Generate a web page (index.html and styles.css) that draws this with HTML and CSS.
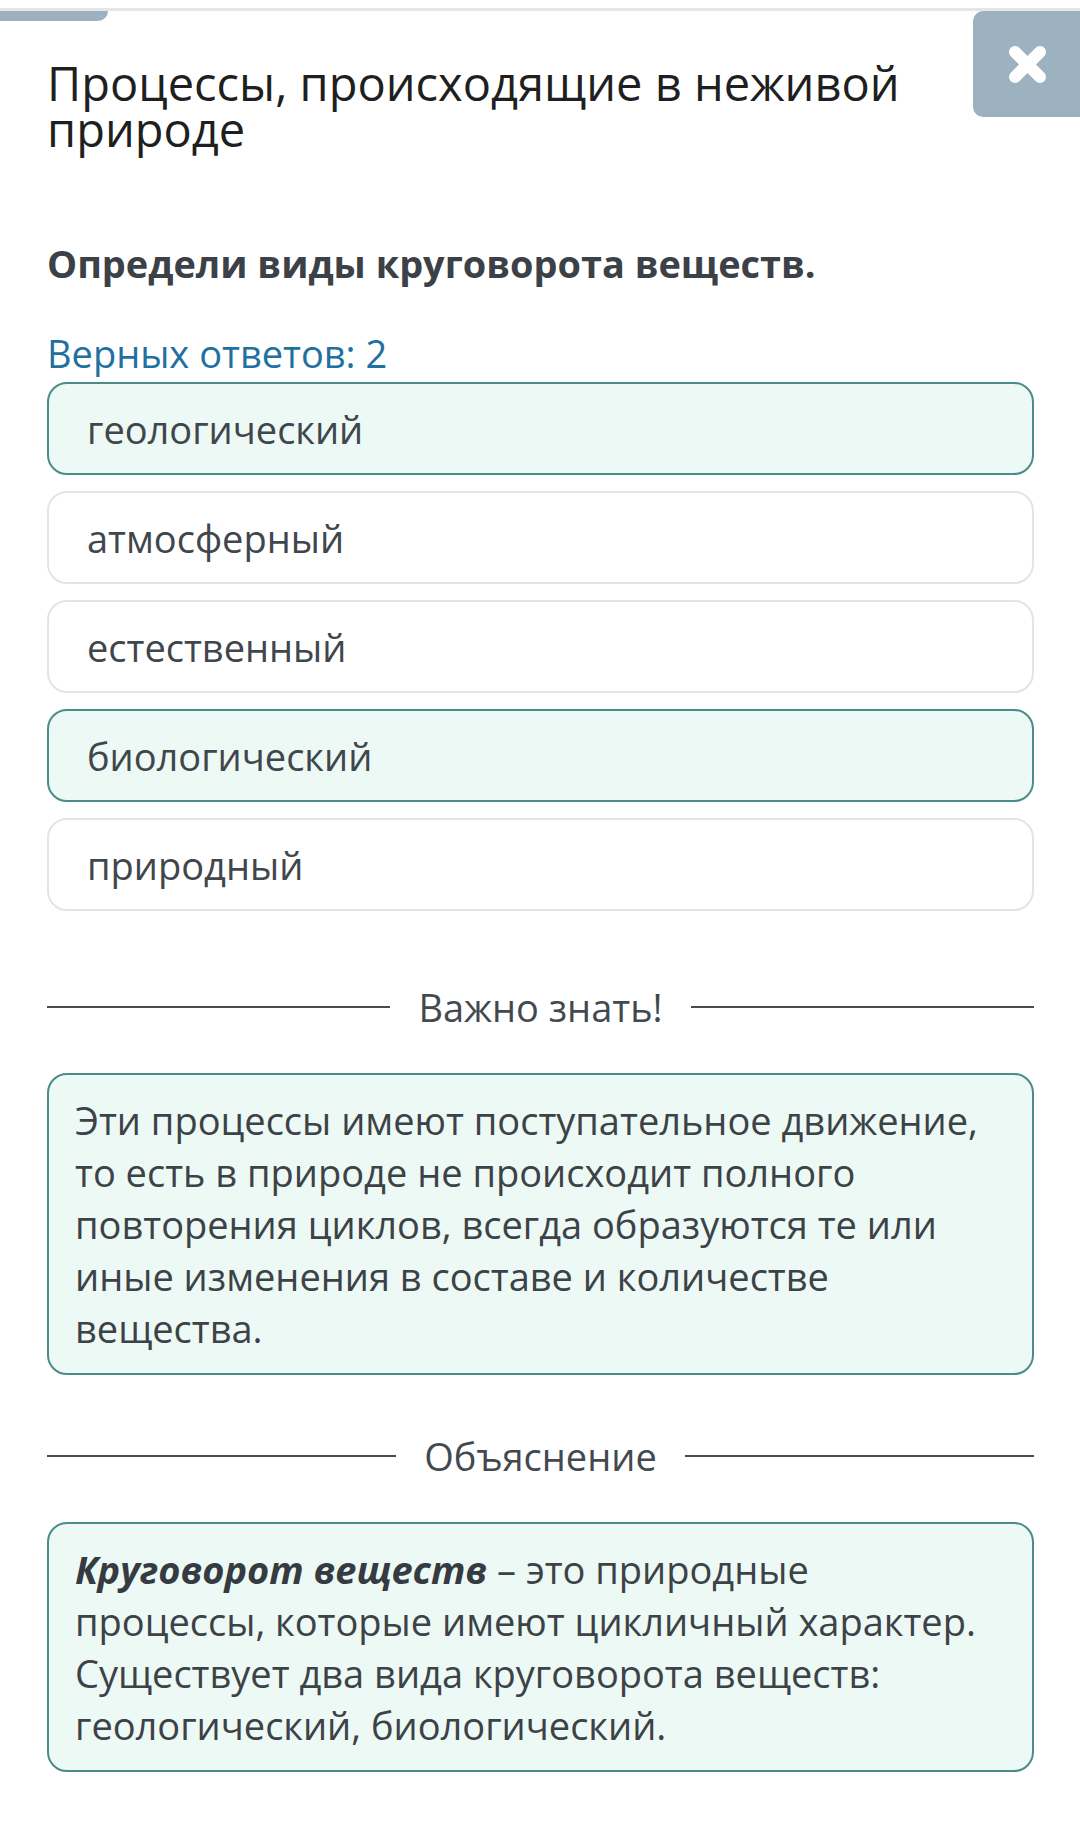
FILE: index.html
```html
<!DOCTYPE html>
<html lang="ru">
<head>
    <meta charset="UTF-8">
    <meta name="viewport" content="width=device-width, initial-scale=1.0">
    <title>Процессы, происходящие в неживой природе</title>
    <link rel="stylesheet" href="styles.css">
</head>
<body>
    <div class="top-line"></div>
    <div class="progress-tab"></div>

    <button class="close-button" aria-label="Закрыть">
        <svg width="39" height="39" viewBox="0 0 39 39">
            <line x1="7" y1="7" x2="32" y2="32" stroke="#fff" stroke-width="12" stroke-linecap="round"></line>
            <line x1="32" y1="7" x2="7" y2="32" stroke="#fff" stroke-width="12" stroke-linecap="round"></line>
        </svg>
    </button>

    <main class="task">
        <h1 class="task-title">Процессы, происходящие в неживой природе</h1>
        <p class="task-question">Определи виды круговорота веществ.</p>
        <p class="answer-count">Верных ответов: 2</p>

        <div class="options">
            <div class="option selected">геологический</div>
            <div class="option">атмосферный</div>
            <div class="option">естественный</div>
            <div class="option selected">биологический</div>
            <div class="option">природный</div>
        </div>

        <div class="divider first">
            <span class="divider-line"></span>
            <span class="divider-label">Важно знать!</span>
            <span class="divider-line"></span>
        </div>
        <div class="note">
            Эти процессы имеют поступательное движение, то есть в природе не происходит полного повторения циклов, всегда образуются те или иные изменения в составе и количестве вещества.
        </div>

        <div class="divider">
            <span class="divider-line"></span>
            <span class="divider-label">Объяснение</span>
            <span class="divider-line"></span>
        </div>
        <div class="note">
            <b><i>Круговорот веществ</i></b> – это природные процессы, которые имеют цикличный характер. Существует два вида круговорота веществ: геологический, биологический.
        </div>
    </main>
</body>
</html>
```

FILE: styles.css
```css
body {
    margin: 0;
    padding: 8px 0 0;
    background-color: #fff;
    font-family: 'Open Sans', 'Noto Sans', sans-serif;
    color: #3d4349;
    position: relative;
}
.top-line {
    height: 3px;
    background-color: #e5e6e7;
}
.progress-tab {
    width: 108px;
    height: 10px;
    background-color: #9db1c0;
    border-bottom-right-radius: 10px;
}
.close-button {
    position: absolute;
    top: 11px;
    right: 0;
    width: 107px;
    height: 106px;
    border: none;
    padding: 0 0 0 2px;
    background-color: #9db2c1;
    border-radius: 10px 0 0 10px;
    display: flex;
    align-items: center;
    justify-content: center;
    cursor: pointer;
}
.task {
    padding: 0 46px 60px 47px;
}
.task-title {
    margin: 39px 110px 0 0;
    font-size: 47px;
    line-height: 46px;
    font-weight: 400;
    color: #1f1f1f;
}
.task-question {
    margin: 88px 0 0;
    font-size: 37.9px;
    line-height: 46px;
    font-weight: 700;
    color: #3b4147;
}
.answer-count {
    margin: 44px 0 0;
    font-size: 38px;
    line-height: 46px;
    color: #21709f;
}
.options {
    display: flex;
    flex-direction: column;
    gap: 16px;
    margin-top: 6px;
}
.option {
    height: 93px;
    box-sizing: border-box;
    display: flex;
    align-items: center;
    padding: 0 38px;
    border: 2px solid #e3e4e4;
    border-radius: 20px;
    font-size: 38px;
    color: #40464c;
}
.option.selected {
    border-color: #4a8c89;
    background-color: #edf9f4;
}
.divider {
    display: flex;
    align-items: center;
    gap: 28px;
    margin-top: 55px;
    height: 52px;
}
.divider.first {
    margin-top: 70px;
}
.divider-line {
    flex: 1;
    height: 2px;
    background-color: #464c52;
}
.divider-label {
    font-size: 38px;
    line-height: 52px;
    color: #43494f;
}
.note {
    margin-top: 40px;
    padding: 19px 26px;
    border: 2px solid #4a8c89;
    border-radius: 20px;
    background-color: #edf9f4;
    font-size: 38px;
    line-height: 52px;
    color: #3c4247;
}
.note b {
    color: #353b41;
}
```
